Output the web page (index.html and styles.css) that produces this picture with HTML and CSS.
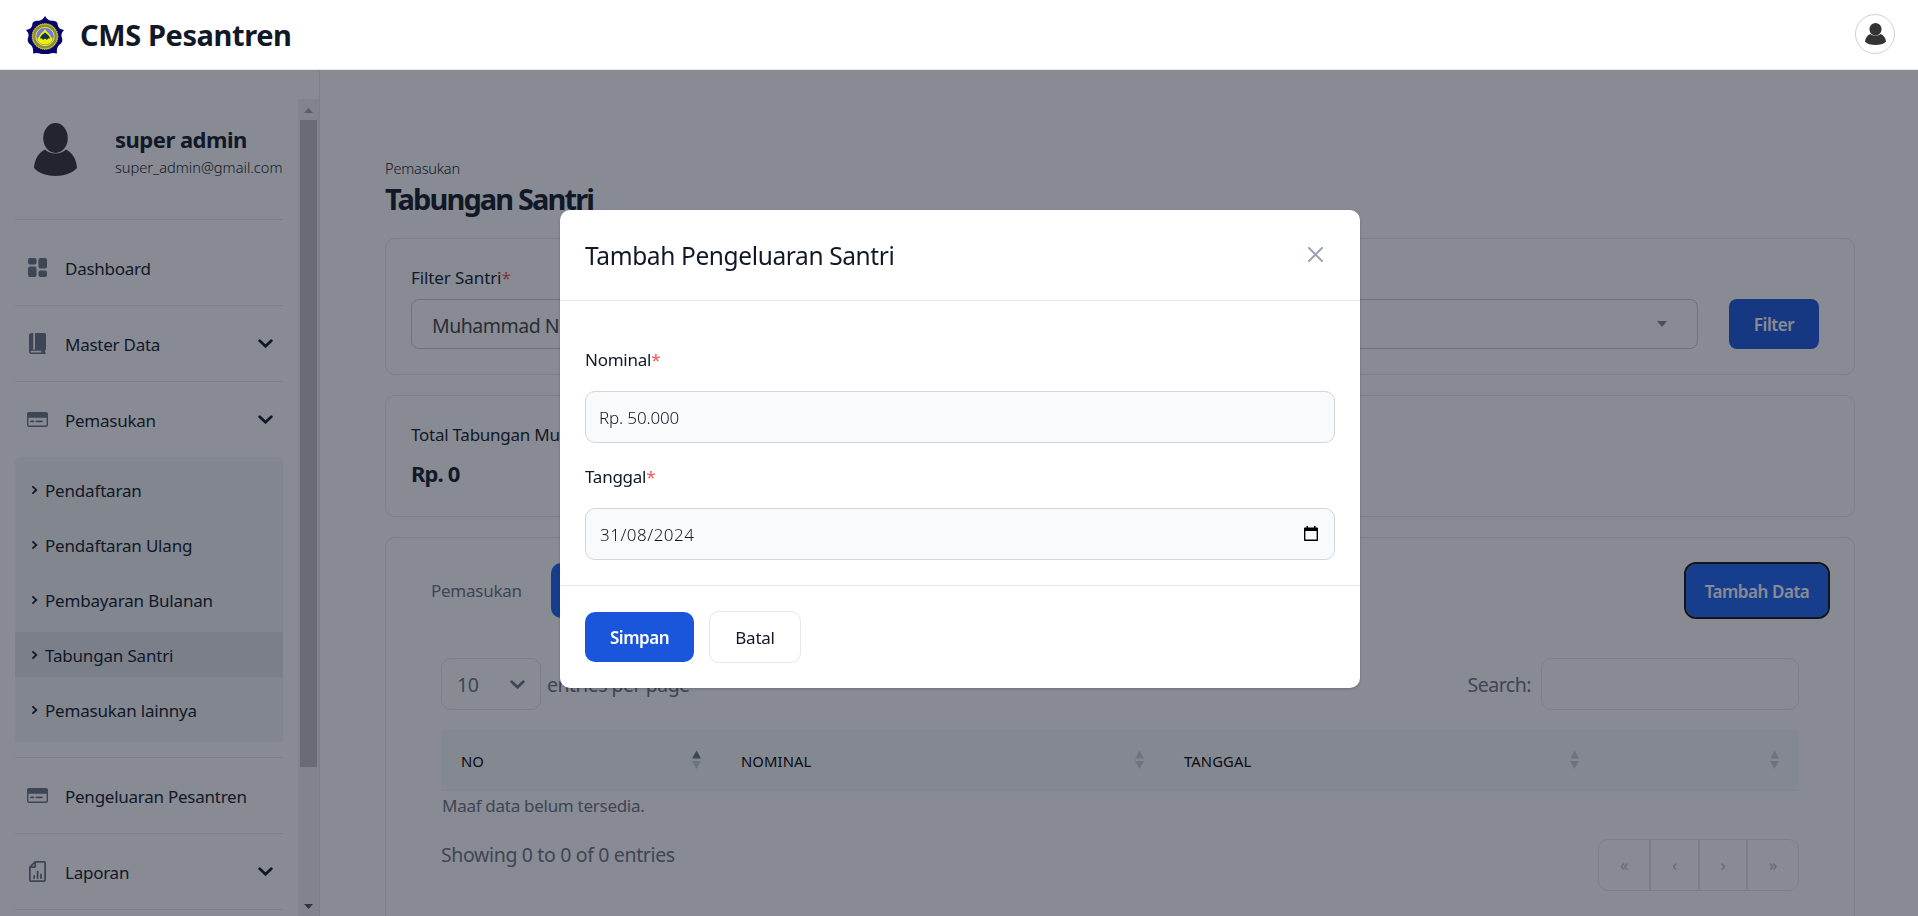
FILE: index.html
```html
<!DOCTYPE html>
<html lang="id">
<head>
<meta charset="utf-8">
<title>CMS Pesantren</title>
<link rel="stylesheet" href="styles.css">
</head>
<body>
<svg width="0" height="0" class="defs">
  <symbol id="chev" viewBox="0 0 15 9"><path d="M1.7 1.7 7.5 7.2l5.8-5.5" fill="none" stroke="currentColor" stroke-width="2.8" stroke-linecap="round"/></symbol>
  <symbol id="card" viewBox="0 0 21 15"><path fill="currentColor" fill-rule="evenodd" d="M2 0h17a2 2 0 0 1 2 2v11a2 2 0 0 1-2 2H2a2 2 0 0 1-2-2V2a2 2 0 0 1 2-2Zm-.6 5.8v6.8c0 .5.4.9.9.9h16.4c.5 0 .9-.4.9-.9V5.800ZM4 8.600h2.400a.8.8 0 0 1 0 1.700H4a.8.8 0 0 1 0-1.700Zm5.300 0H15a.8.8 0 0 1 0 1.700H9.300a.8.8 0 0 1 0-1.700Z"/></symbol>
  <symbol id="person" viewBox="0 0 43 53" preserveAspectRatio="none"><ellipse cx="21.500" cy="15" rx="12.300" ry="15"/><path d="M11 26.500c5.500 5.200 15.500 5.200 21 0C39 30 42.500 37 43 45c-9 10.500-34 10.500-43 0C.5 37 4 30 11 26.500Z"/></symbol>
  <symbol id="sort" viewBox="0 0 9 18"><path class="up" d="M4.500 0 9 8H0Z"/><path class="down" d="M0 10.500h9l-4.500 8Z"/></symbol>
  <symbol id="gt" viewBox="0 0 7 10"><path d="m1.400 1.300 3.900 3.600-3.900 3.700" fill="none" stroke="currentColor" stroke-width="1.800"/></symbol>
</svg>

<header class="topbar">
  <svg class="logo" viewBox="0 0 38 38">
    <path fill="#06066e" d="M19 0c1.600 3 4 4.600 7 4.800 3 .2 5.500.6 5.700 4 .2 2.700 2.300 4.600 6.300 5.200-2.600 3-3.200 5-2 8 .9 2.700 0 5-2.600 6.800C31 31 30.500 34 31 37.500c-3-.8-5.500-.7-7.500.2-3 .5-6 .5-9 0-2-.9-4.500-1-7.500-.2.5-3.500 0-6.500-2.400-8.700C2 27 1.100 24.700 2 22c1.200-3 .6-5-2-8 4-.6 6.100-2.500 6.300-5.200.2-3.400 2.700-3.800 5.700-4C15 4.600 17.400 3 19 0Z"/>
    <circle cx="19" cy="20.500" r="12.500" fill="#8f8d2c" stroke="#d8d64c" stroke-width=".8"/>
    <circle cx="19" cy="20.500" r="12.900" fill="none" stroke="#cfcd3c" stroke-width="1" stroke-dasharray="1.200 1"/>
    <circle cx="19" cy="20.500" r="9.200" fill="#6f78e8" stroke="#e9e640" stroke-width="1"/>
    <path fill="#f2f000" d="M19 12.500c1 3.500 5 4.500 6 8.500 1.200.5 1.800 1.500 1.500 3-1.500 3-4 4.500-7.500 4.500s-6-1.500-7.500-4.500c-.3-1.500.3-2.500 1.500-3 1-4 5-5 6-8.500Z"/>
    <path fill="#12344a" d="M14 22.500c.5-3 3-4.500 5-6 2 1.500 4.500 3 5 6h-2l-1 1.500-2-1.500-2 1.500-1-1.500Z"/>
  </svg>
  <span class="brand">CMS Pesantren</span>
  <span class="avatar"><svg><use href="#person"/></svg></span>
</header>

<div class="shell">
  <aside class="sidebar">
    <nav class="nav">
      <div class="profile">
        <svg class="profile-pic"><use href="#person"/></svg>
        <div><div class="profile-name">super admin</div><div class="profile-mail">super_admin@gmail.com</div></div>
      </div>
      <a class="item first"><svg viewBox="0 0 19 19" width="19" height="19" fill="currentColor"><rect width="8.500" height="6.500" rx="2"/><rect y="8.500" width="8.500" height="10.500" rx="2"/><rect x="10.500" width="8.500" height="10.500" rx="2"/><rect x="10.500" y="12.500" width="8.500" height="6.500" rx="2"/></svg><span>Dashboard</span></a>
      <a class="item"><svg viewBox="0 0 17 21" width="17" height="21"><path fill="currentColor" fill-rule="evenodd" d="M2.500 0H4.200v16.500H6V0H15.500c.8 0 1.500.6 1.500 1.500V16c0 .9-.4 1.300-1.100 1.500v1.800h.1c1.300.3 1.300 1.700 0 1.700H2.500C1 21 0 20 0 18.500v-16C0 1 1 0 2.500 0ZM2.600 17.700c-1.300.3-1.300 1.500 0 1.700h9.600v-1.700Z"/></svg><span>Master Data</span><svg class="chev"><use href="#chev"/></svg></a>
      <a class="item open"><svg width="21" height="15"><use href="#card"/></svg><span>Pemasukan</span><svg class="chev"><use href="#chev"/></svg></a>
      <div class="submenu">
        <a><svg><use href="#gt"/></svg>Pendaftaran</a>
        <a><svg><use href="#gt"/></svg>Pendaftaran Ulang</a>
        <a><svg><use href="#gt"/></svg>Pembayaran Bulanan</a>
        <a class="active"><svg><use href="#gt"/></svg>Tabungan Santri</a>
        <a><svg><use href="#gt"/></svg>Pemasukan lainnya</a>
      </div>
      <a class="item"><svg width="21" height="15"><use href="#card"/></svg><span>Pengeluaran Pesantren</span></a>
      <a class="item"><svg viewBox="0 0 17 21" width="17" height="21" fill="none" stroke="currentColor"><path stroke-width="1.800" d="M6.200.9H15c.6 0 1.100.5 1.100 1.100v17c0 .6-.5 1.100-1.100 1.100H2c-.6 0-1.100-.5-1.100-1.100V6.200Z"/><path stroke-width="1.800" d="M6.200 1v4.200c0 .6-.4 1-1 1H1"/><path stroke-width="1.800" stroke-linecap="round" d="M5.200 15v2M8.600 10.500V17M12 13.500V17"/></svg><span>Laporan</span><svg class="chev"><use href="#chev"/></svg></a>
    </nav>
    <div class="scrollbar">
      <svg width="9" height="5" viewBox="0 0 9 5"><path fill="#a3a3a3" d="M4.500 0 9 5H0Z"/></svg>
      <div class="thumb"></div>
      <svg width="9" height="5" viewBox="0 0 9 5"><path fill="#505050" d="M0 0h9L4.500 5Z"/></svg>
    </div>
  </aside>

  <main class="main">
    <div class="crumb">Pemasukan</div>
    <h1 class="title">Tabungan Santri</h1>
    <section class="panel filter">
      <div class="field">
        <div class="label">Filter Santri<i>*</i></div>
        <div class="select"><span>Muhammad N</span><svg width="10" height="6" viewBox="0 0 10 6"><path fill="#888" d="M0 0h10L5 6Z"/></svg></div>
      </div>
      <button class="btn-filter">Filter</button>
    </section>
    <section class="panel total">
      <div class="total-label">Total Tabungan Muh</div>
      <div class="total-value">Rp. 0</div>
    </section>
    <section class="panel data">
      <div class="tabs">
        <span class="tab">Pemasukan</span><span class="tab on"></span>
        <button class="btn-add">Tambah Data</button>
      </div>
      <div class="grid">
        <div class="tools">
          <div class="len"><span>10</span><svg class="chev"><use href="#chev"/></svg></div>
          <span class="len-text">entries per page</span>
          <span class="search-text">Search:</span>
          <div class="search"></div>
        </div>
        <div class="thead">
          <div class="th asc">NO<svg><use href="#sort"/></svg></div>
          <div class="th">NOMINAL<svg><use href="#sort"/></svg></div>
          <div class="th">TANGGAL<svg><use href="#sort"/></svg></div>
          <div class="th"><svg><use href="#sort"/></svg></div>
        </div>
        <div class="empty">Maaf data belum tersedia.</div>
        <div class="foot">
          <span class="info">Showing 0 to 0 of 0 entries</span>
          <div class="pager"><span>«</span><span>‹</span><span>›</span><span>»</span></div>
        </div>
      </div>
    </section>
  </main>
</div>

<div class="overlay">
  <div class="modal">
    <div class="modal-head"><span>Tambah Pengeluaran Santri</span><svg width="15" height="15" viewBox="0 0 15 15"><path d="m1 1 13 13M14 1 1 14" stroke="#9ca3af" stroke-width="2" stroke-linecap="round"/></svg></div>
    <div class="modal-body">
      <div class="mlabel n">Nominal<i>*</i></div>
      <div class="input nominal">Rp. 50.000</div>
      <div class="mlabel t">Tanggal<i>*</i></div>
      <div class="input date"><span>31/08/2024</span><svg width="14" height="15" viewBox="0 0 14 15"><path fill="#000" fill-rule="evenodd" d="M2.500 0H4v1.500h6V0h1.500v1.500H13c.6 0 1 .4 1 1V14c0 .6-.4 1-1 1H1c-.6 0-1-.4-1-1V2.500c0-.6.4-1 1-1h1.500ZM1.400 5v8.600h11.200V5Z"/></svg></div>
    </div>
    <div class="modal-foot"><button class="btn-save">Simpan</button><button class="btn-cancel">Batal</button></div>
  </div>
</div>
</body>
</html>
```
FILE: styles.css
```css
* { box-sizing: border-box; }
body {
  margin: 0;
  height: 916px;
  overflow: hidden;
  background: #fff;
  color: #111827;
  font: 400 17px/26px "Noto Sans", "Open Sans", sans-serif;
  letter-spacing: -0.25px;
}
svg { display: block; flex: none; }
.defs { position: absolute; }
i { font-style: normal; color: #f05252; }
button { border: 0; padding: 2px 0 0; color: #fff; font: inherit; font-weight: 600; letter-spacing: -0.45px; }

.topbar {
  position: relative;
  z-index: 3;
  display: flex;
  align-items: center;
  height: 70px;
  padding: 0 23px 0 26px;
  background: #fff;
  border-bottom: 1px solid #e5e7eb;
}
.logo { width: 38px; height: 38px; }
.brand { margin: 1px 0 0 16px; font-size: 29px; font-weight: 700; letter-spacing: -0.4px; }
.avatar {
  display: flex;
  align-items: center;
  justify-content: center;
  width: 40px;
  height: 40px;
  margin-left: auto;
  margin-top: -1px;
  border: 1px solid #d0d0d0;
  border-radius: 50%;
  fill: #333;
}
.avatar svg { width: 21px; height: 22px; margin-top: -1px; }

.shell { display: flex; height: 846px; }
.sidebar { display: flex; width: 320px; padding-top: 29px; border-right: 1px solid #e5e7eb; flex: none; }
.nav { width: 298px; padding: 0 15px; overflow: hidden; }
.profile {
  display: flex;
  align-items: center;
  height: 121px;
  padding-left: 19px;
  border-bottom: 1px solid #e5e7eb;
}
.profile-pic { width: 43px; height: 53px; margin: -20px 38px 0 0; fill: #333; }
.profile > div { margin-top: -12px; }
.profile-name { font-size: 22px; font-weight: 700; letter-spacing: -0.5px; line-height: 28px; }
.profile-mail { font-size: 14.6px; font-weight: 300; letter-spacing: 0; line-height: 28px; white-space: nowrap; }
.item {
  display: flex;
  align-items: center;
  height: 76px;
  padding: 0 10px 0 13px;
  border-bottom: 1px solid #e5e7eb;
}
.item.first { height: 86px; padding-top: 10px; }
.item.open { border: 0; height: 75px; }
.item > svg:first-child { color: #6b7280; }
.item > svg[width="21"] { margin-left: -1px; }
.item > svg[width="17"] { margin: 0 1px; }
.item > span { margin: 2px 0 0 18px; }
.item > svg[width="21"] + span { margin-left: 17px; }
.chev { width: 15px; height: 9px; margin-left: auto; }
.submenu {
  height: 301px;
  padding: 10px 0 0;
  border-bottom: 1px solid #e5e7eb;
  border-radius: 6px 6px 0 0;
  background: linear-gradient(#f3f4f6, #f3f4f6) top / 100% 285px no-repeat;
}
.submenu a { display: flex; align-items: center; height: 45px; margin-bottom: 10px; padding: 2px 0 0 16px; letter-spacing: -0.18px; }
.submenu .active { background: #e5e7eb; }
.submenu svg { width: 7px; height: 10px; margin: -2px 7px 0 0; }

.scrollbar {
  display: flex;
  flex-direction: column;
  align-items: center;
  width: 21px;
  padding: 9px 0 7px;
  background: #f1f1f1;
}
.thumb { width: 17px; height: 647px; margin: 7px 0 auto; background: #c1c1c1; }

.main { width: 1535px; padding: 85px 0 0 65px; }
.crumb { font-size: 14.6px; font-weight: 300; letter-spacing: -0.2px; }
.title { margin: 1px 0 22px; font-size: 29px; line-height: 34px; font-weight: 700; letter-spacing: -1.88px; }
.panel { margin-bottom: 20px; border: 1px solid #e5e7eb; border-radius: 10px; }
.filter { display: flex; align-items: flex-end; gap: 31px; height: 137px; padding: 0 35px 25px 25px; }
.field { flex: 1; }
.label { height: 34px; letter-spacing: -0.1px; }
.select {
  display: flex;
  align-items: center;
  justify-content: space-between;
  height: 50px;
  padding: 0 30px 0 20px;
  border: 1px solid #c8ccd3;
  border-radius: 8px;
  color: #444;
  font-size: 19.5px;
  letter-spacing: -0.5px;
}
.select span { margin-top: 3px; }
.btn-filter { width: 90px; height: 50px; border-radius: 8px; background: #1a56db; }
.total { height: 122px; padding: 26px 25px; }
.total-label { width: 150px; overflow: hidden; white-space: nowrap; }
.total-value { margin-top: 10px; font-size: 22px; font-weight: 700; line-height: 30px; letter-spacing: -0.9px; }
.data { height: 420px; padding: 25px 26px 0 25px; }
.tabs { display: flex; align-items: center; height: 55px; color: #6b7280; }
.tab { padding-left: 20px; width: 140px; padding-top: 1px; }
.tab.on { height: 55px; border-radius: 10px; background: #1c64f2; }
.btn-add { width: 142px; height: 53px; margin-left: auto; border-radius: 10px; background: #1c64f2; outline: 2px solid #101010; }
.grid { padding: 40px 29px 0 30px; color: #6b7280; }
.tools { display: flex; align-items: center; height: 52px; font-size: 19.5px; letter-spacing: -0.5px; }
.len { display: flex; align-items: center; width: 100px; height: 52px; padding: 0 15px 0 15px; border: 1px solid #e5e7eb; border-radius: 10px; }
.len span, .len-text, .search-text { padding-top: 2px; }
.len-text { margin-left: 6px; }
.search-text { margin: 0 10px 0 auto; }
.search { width: 258px; height: 52px; border: 1px solid #e5e7eb; border-radius: 10px; }
.thead {
  display: grid;
  grid-template-columns: 280px 443px 435px 200px;
  height: 61px;
  margin-top: 20px;
  background: #f7f8f9;
  border-bottom: 1px solid #eceef0;
}
.th { display: flex; align-items: center; padding: 1px 20px 0; font-size: 14.8px; letter-spacing: 0.1px; color: #000; }
.th svg { width: 9px; height: 19px; margin: -2px 0 0 auto; fill: #6b7280; opacity: 0.3; }
.th.asc svg { opacity: 1; }
.asc { --down: 0.3; }
.down { opacity: var(--down, 1); }
.empty { padding: 2px 0 0 1px; height: 48px; letter-spacing: -0.28px; }
.foot { display: flex; justify-content: space-between; height: 52px; font-size: 19.5px; letter-spacing: -0.35px; }
.info { padding-top: 3px; }
.pager { display: grid; grid-template-columns: 50px 49px 48px 52px; border: 1px solid #e5e7eb; border-radius: 10px; width: 201px; color: #b6bbc4; font-size: 17px; }
.pager span { text-align: center; line-height: 50px; }
.pager span + span { border-left: 2px solid #e5e7eb; }

.overlay {
  position: fixed;
  inset: 70px 0 0;
  z-index: 2;
  display: flex;
  justify-content: center;
  align-items: flex-start;
  padding: 140px 0 0 2px;
  background: rgba(17, 24, 39, 0.5);
}
.modal { width: 800px; height: 478px; border-radius: 10px; background: #fff; box-shadow: 0 1px 3px rgba(0, 0, 0, 0.2); }
.modal-head {
  display: flex;
  align-items: center;
  justify-content: space-between;
  height: 91px;
  padding: 0 37px 0 25px;
  border-bottom: 1px solid #e5e7eb;
  font-size: 24.5px;
  letter-spacing: -0.38px;
}
.modal-head span { margin-top: 1px; }
.modal-head svg { margin-top: -2px; }
.modal-body { height: 285px; padding: 46px 25px 0; border-bottom: 1px solid #e5e7eb; }
.mlabel { height: 26px; }
.mlabel.t { margin-top: 21px; }
.input {
  display: flex;
  align-items: center;
  justify-content: space-between;
  height: 52px;
  margin-top: 18px;
  padding: 2px 16px 0 13px;
  border: 1px solid #d1d5db;
  border-radius: 10px;
  background: #f9fafb;
  font-weight: 300;
  letter-spacing: -0.15px;
}
.date { padding-left: 14px; letter-spacing: 0.5px; }
.date svg { margin-top: -4px; }
.modal-foot { display: flex; align-items: center; gap: 15px; padding: 25px; }
.btn-save { width: 109px; height: 50px; border-radius: 10px; background: #1a56db; }
.btn-cancel { width: 92px; height: 52px; border: 1px solid #e5e7eb; border-radius: 10px; background: #fff; color: #111827; font-weight: 400; letter-spacing: -0.25px; }
```
